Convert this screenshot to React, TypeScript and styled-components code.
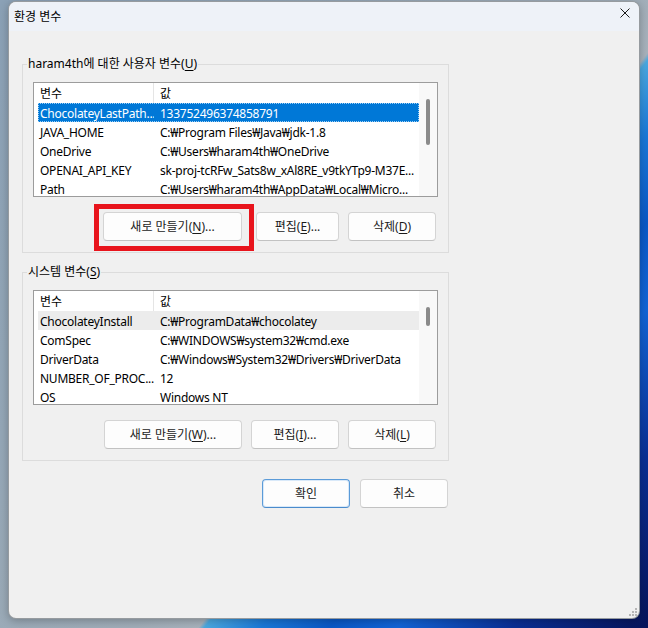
import React from "react";
import styled, { createGlobalStyle } from "styled-components";

const GlobalStyle = createGlobalStyle`
  html, body { margin: 0; padding: 0; }
  body { font-family: "Noto Sans", "Noto Sans CJK KR", sans-serif; }
  * { box-sizing: border-box; }
`;

const Desktop = styled.div`
  width: 648px;
  height: 628px;
  padding: 1px 8px 0 8px;
  overflow: hidden;
  background:
    linear-gradient(128deg, #8ba1b6 0%, #95a7b7 30%, #a0adb8 55%, #a7b2bc 60.5%, rgba(167,178,188,0) 61%),
    linear-gradient(128deg, #4aa8e0 0%, #4aa8e0 61%, #1a78d8 66%, #0a58c6 72%, #1264d6 78%, #0a2f95 88%, #07145a 100%);
`;

const Window = styled.div`
  position: relative;
  width: 632px;
  height: 618px;
  background: #f0f0f0;
  border: 1px solid rgba(40, 50, 60, 0.45);
  border-radius: 8px;
  overflow: hidden;
  display: flex;
  flex-direction: column;
  box-shadow: 0 2px 8px rgba(0, 0, 0, 0.25);
`;

const TitleBar = styled.div`
  height: 29px;
  flex: none;
  display: flex;
  align-items: center;
  justify-content: space-between;
  padding-left: 5px;
  background: #eef2f8;
`;

const Title = styled.span`
  font-size: 12px;
  line-height: 16px;
  color: #000;
`;

const CloseIcon = styled.svg`
  align-self: flex-start;
  margin-top: 6px;
  margin-right: 9px;
  width: 10px;
  height: 10px;
`;

const Body = styled.div`
  flex: 1;
  display: flex;
  flex-direction: column;
  padding: 25px 0 0 13px;
`;

const Group = styled.fieldset`
  width: 427px;
  margin: 0 0 11px 0;
  padding: 0 10px 11px 10px;
  border: 1px solid #dcdcdc;
  min-width: 0;
`;

const Legend = styled.legend`
  margin-left: -6px;
  padding: 0 1px;
  font-size: 12px;
  line-height: 16px;
  color: #000;
`;

const AccessKey = styled.u`
  text-decoration: underline;
  text-underline-offset: 2px;
`;

const List = styled.div`
  margin-top: 10px;
  height: 115px;
  border: 1px solid #9c9c9c;
  background: #fff;
  display: flex;
  overflow: hidden;
`;

const ListBody = styled.div`
  flex: 1;
  min-width: 0;
  padding-left: 4px;
  overflow: hidden;
`;

const Row = styled.div<{ $state?: "selected" | "inactive" | "header" }>`
  display: grid;
  grid-template-columns: 116px 1fr;
  height: ${(p) => (p.$state === "header" ? "20px" : "19px")};
  align-items: stretch;
  font-size: 12px;
  letter-spacing: ${(p) => (p.$state === "header" ? "0" : "-0.25px")};
  color: ${(p) => (p.$state === "selected" ? "#fff" : "#000")};
  background: ${(p) =>
    p.$state === "selected" ? "#0078d7" : p.$state === "inactive" ? "#ececec" : "transparent"};
  outline: ${(p) => (p.$state === "selected" ? "1px dotted #9fd0f5" : "none")};
  outline-offset: -1px;
`;

const Cell = styled.div<{ $first?: boolean; $divider?: boolean }>`
  display: flex;
  align-items: center;
  padding-left: ${(p) => (p.$first ? "2px" : "6px")};
  padding-top: 2px;
  white-space: nowrap;
  overflow: hidden;
  line-height: 16px;
  border-right: ${(p) => (p.$divider ? "1px solid #e5e5e5" : "none")};
`;

const ScrollTrack = styled.div`
  width: 18px;
  flex: none;
  background: #f8f8f8;
  padding: 16px 0 0 7px;
`;

const Thumb = styled.div<{ $h: number }>`
  width: 4px;
  height: ${(p) => p.$h}px;
  border-radius: 2px;
  background: #8a8a8a;
`;

const ButtonRow = styled.div<{ $gap: number; $pr: number }>`
  display: flex;
  justify-content: flex-end;
  align-items: flex-start;
  gap: ${(p) => p.$gap}px;
  padding-right: ${(p) => p.$pr}px;
`;

const GroupButtons = styled(ButtonRow)`
  margin-top: 15px;
`;

const DialogButtons = styled(ButtonRow)`
  width: 427px;
  margin-top: 7px;
`;

const Button = styled.button<{ $w: number; $default?: boolean }>`
  width: ${(p) => p.$w}px;
  height: 29px;
  padding: 0;
  font-family: inherit;
  font-size: 12px;
  line-height: 16px;
  color: #1b1b1b;
  background: #fdfdfd;
  border: 1px solid ${(p) => (p.$default ? "#5b9bd8" : "#d4d4d4")};
  border-bottom-color: ${(p) => (p.$default ? "#4a8bcc" : "#c2c2c2")};
  border-radius: 4px;
  box-shadow: ${(p) => (p.$default ? "inset 0 0 0 1px #d9e9f9" : "none")};
  white-space: nowrap;
`;

const Highlight = styled.div`
  position: relative;
  margin-right: 5px;
  &::after {
    content: "";
    position: absolute;
    top: -8px;
    left: -9px;
    right: -12px;
    bottom: -10px;
    border: 5px solid #e8141c;
    pointer-events: none;
  }
`;

const Grip = styled.svg`
  position: absolute;
  right: 2px;
  bottom: 2px;
  width: 8px;
  height: 8px;
`;

type Item = { name: string; value: string; state?: "selected" | "inactive" };

const userVars: Item[] = [
  { name: "ChocolateyLastPath...", value: "133752496374858791", state: "selected" },
  { name: "JAVA_HOME", value: "C:₩Program Files₩Java₩jdk-1.8" },
  { name: "OneDrive", value: "C:₩Users₩haram4th₩OneDrive" },
  { name: "OPENAI_API_KEY", value: "sk-proj-tcRFw_Sats8w_xAl8RE_v9tkYTp9-M37E..." },
  { name: "Path", value: "C:₩Users₩haram4th₩AppData₩Local₩Micro..." },
];

const systemVars: Item[] = [
  { name: "ChocolateyInstall", value: "C:₩ProgramData₩chocolatey", state: "inactive" },
  { name: "ComSpec", value: "C:₩WINDOWS₩system32₩cmd.exe" },
  { name: "DriverData", value: "C:₩Windows₩System32₩Drivers₩DriverData" },
  { name: "NUMBER_OF_PROC...", value: "12" },
  { name: "OS", value: "Windows NT" },
];

function VarList({ items, thumb }: { items: Item[]; thumb: number }) {
  return (
    <List>
      <ListBody>
        <Row $state="header">
          <Cell $first $divider>변수</Cell>
          <Cell>값</Cell>
        </Row>
        {items.map((it) => (
          <Row key={it.name} $state={it.state}>
            <Cell $first>{it.name}</Cell>
            <Cell>{it.value}</Cell>
          </Row>
        ))}
      </ListBody>
      <ScrollTrack>
        <Thumb $h={thumb} />
      </ScrollTrack>
    </List>
  );
}

export default function App() {
  return (
    <>
      <GlobalStyle />
      <Desktop>
        <Window>
          <TitleBar>
            <Title>환경 변수</Title>
            <CloseIcon viewBox="0 0 10 10">
              <path d="M0.5 0.5 L9.5 9.5 M9.5 0.5 L0.5 9.5" stroke="#1a1a1a" strokeWidth="1" fill="none" />
            </CloseIcon>
          </TitleBar>
          <Body>
            <Group>
              <Legend>
                haram4th에 대한 사용자 변수(<AccessKey>U</AccessKey>)
              </Legend>
              <VarList items={userVars} thumb={46} />
              <GroupButtons $gap={9} $pr={2}>
                <Highlight>
                  <Button $w={139}>
                    새로 만들기(<AccessKey>N</AccessKey>)...
                  </Button>
                </Highlight>
                <Button $w={83}>
                  편집(<AccessKey>E</AccessKey>)...
                </Button>
                <Button $w={88}>
                  삭제(<AccessKey>D</AccessKey>)
                </Button>
              </GroupButtons>
            </Group>
            <Group>
              <Legend>
                시스템 변수(<AccessKey>S</AccessKey>)
              </Legend>
              <VarList items={systemVars} thumb={19} />
              <GroupButtons $gap={9} $pr={2}>
                <Button $w={138}>
                  새로 만들기(<AccessKey>W</AccessKey>)...
                </Button>
                <Button $w={88}>
                  편집(<AccessKey>I</AccessKey>)...
                </Button>
                <Button $w={88}>
                  삭제(<AccessKey>L</AccessKey>)
                </Button>
              </GroupButtons>
            </Group>
            <DialogButtons $gap={10} $pr={1}>
              <Button $w={88} $default>확인</Button>
              <Button $w={88}>취소</Button>
            </DialogButtons>
          </Body>
          <Grip viewBox="0 0 8 8">
            <rect x="6" y="0" width="2" height="2" fill="#b5b5b5" />
            <rect x="3" y="3" width="2" height="2" fill="#b5b5b5" />
            <rect x="6" y="3" width="2" height="2" fill="#b5b5b5" />
            <rect x="0" y="6" width="2" height="2" fill="#b5b5b5" />
            <rect x="3" y="6" width="2" height="2" fill="#b5b5b5" />
            <rect x="6" y="6" width="2" height="2" fill="#b5b5b5" />
          </Grip>
        </Window>
      </Desktop>
    </>
  );
}
